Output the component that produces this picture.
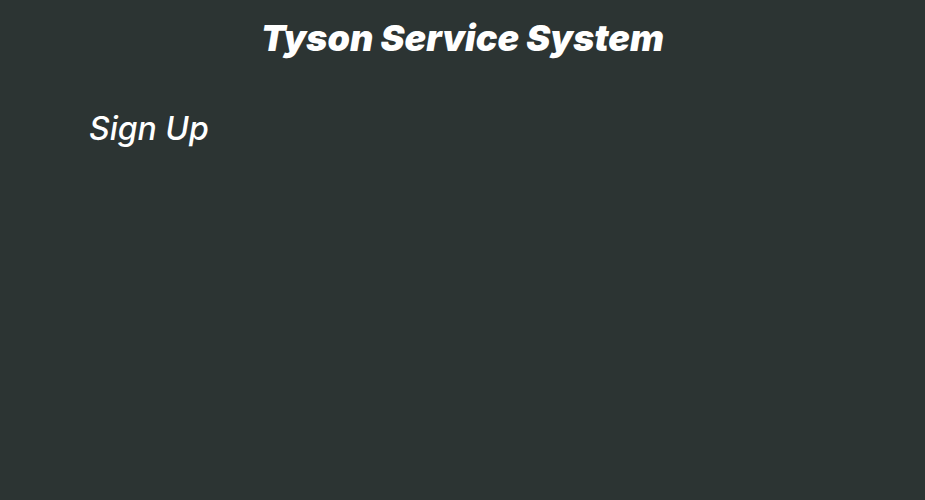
import React from "react";

function App() {
  return (
    <div className="min-h-screen bg-[#2c3433] text-white font-['Inter',sans-serif]">
      <h1 className="pt-[18px] text-center text-4xl font-black italic">
        Tyson Service System
      </h1>
      <div className="px-[89px] pt-[47px]">
        <h2 className="text-[32px] font-medium italic">Sign Up</h2>
      </div>
    </div>
  );
}

export default App;
